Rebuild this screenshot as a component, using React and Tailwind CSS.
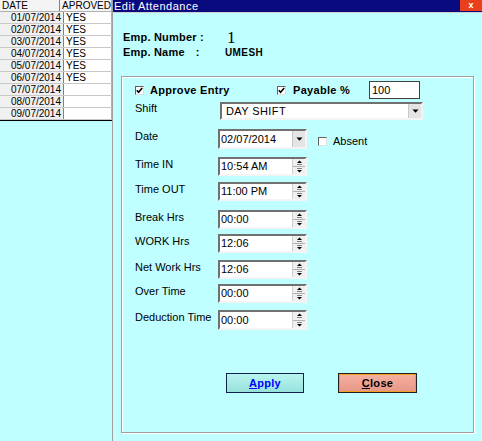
import React from "react";

const F = "font-['Liberation_Sans',Arial,sans-serif]";

const dates = [
  ["01/07/2014", "YES"],
  ["02/07/2014", "YES"],
  ["03/07/2014", "YES"],
  ["04/07/2014", "YES"],
  ["05/07/2014", "YES"],
  ["06/07/2014", "YES"],
  ["07/07/2014", ""],
  ["08/07/2014", ""],
  ["09/07/2014", ""],
];

function Check({ checked }) {
  return (
    <div className="w-[9px] h-[9px] bg-white border border-t-[#606060] border-l-[#606060] border-b-[#e0e0e0] border-r-[#e0e0e0] flex items-center justify-center shrink-0">
      {checked && (
        <svg width="7" height="7" viewBox="0 0 7 7">
          <path d="M0.8 3.2 L2.6 5.2 L6.2 1" stroke="#000" strokeWidth="1.6" fill="none" />
        </svg>
      )}
    </div>
  );
}

function Spin() {
  return (
    <div className="w-[13px] flex flex-col border-l border-[#d0d0d0] shrink-0">
      <div className="flex-1 bg-[#f0f0f0] border-b border-[#b0b0b0] flex items-center justify-center">
        <svg width="7" height="5" viewBox="0 0 7 5">
          <path d="M3.5 0.5 L6 3 L1 3 Z" fill="#000" />
          <path d="M1 4.5 L6 4.5" stroke="#808080" strokeWidth="1" />
        </svg>
      </div>
      <div className="flex-1 bg-[#f0f0f0] flex items-center justify-center">
        <svg width="7" height="5" viewBox="0 0 7 5">
          <path d="M1 0.5 L6 0.5" stroke="#808080" strokeWidth="1" />
          <path d="M1 2 L6 2 L3.5 4.5 Z" fill="#000" />
        </svg>
      </div>
    </div>
  );
}

function DropBtn() {
  return (
    <div className="w-[13px] bg-[#e4e4e4] border-l border-[#c8c8c8] flex items-center justify-center shrink-0">
      <svg width="7" height="4" viewBox="0 0 7 4">
        <path d="M0.5 0.5 L6.5 0.5 L3.5 3.8 Z" fill="#000" />
      </svg>
    </div>
  );
}

function Field({ value, spin = true, w = "w-[89px]", h = "h-[19px]" }) {
  return (
    <div className={`${w} ${h} bg-white border-2 border-t-[#707070] border-l-[#707070] border-b-[#f4f4f4] border-r-[#f4f4f4] flex`}>
      <div className="flex-1 pl-[1px] text-[11px] leading-[15px] text-black flex items-center">{value}</div>
      {spin ? <Spin /> : <DropBtn />}
    </div>
  );
}

function Row({ label, value, mt, spin = true }) {
  return (
    <div className={`flex items-start ${mt}`}>
      <div className="w-[83px] text-[11px] leading-[14px] text-black">{label}</div>
      <Field value={value} spin={spin} />
    </div>
  );
}

export default function App() {
  return (
    <div className={`w-[482px] h-[441px] bg-[#c0ffff] flex overflow-hidden ${F}`}>
      {/* Left grid */}
      <div className="w-[112px] shrink-0 flex flex-col">
        <div className="border-b border-black">
          <div className="flex h-[12px] border-b border-[#b0b0b0] bg-[#f4f4f4] text-[10px] leading-[11px] text-black">
            <div className="w-[64px] pl-[2px] border-r border-[#808080]">DATE</div>
            <div className="flex-1 pl-[2px] border-r border-[#b0b0b0]">APROVED</div>
          </div>
          {dates.map(([d, a]) => (
            <div key={d} className="flex h-[12px] border-b border-[#c8c8c8] text-[10px] leading-[11px] text-black">
              <div className="w-[64px] pr-[2px] text-right bg-[#f0f0f0] border-r border-[#808080]">{d}</div>
              <div className="flex-1 pl-[2px] bg-white border-r border-[#b0b0b0]">{a}</div>
            </div>
          ))}
        </div>
      </div>

      {/* Dialog */}
      <div className="flex-1 flex flex-col border-l border-[#a0a0a0]">
        <div className="h-[12px] bg-[#0a0a80] flex items-center justify-between">
          <div className="text-white text-[11px] leading-[12px] tracking-[0.5px] pl-[1px]">Edit Attendance</div>
          <div className="w-[22px] h-[11px] self-start bg-[#e8401c] flex items-center justify-center text-white text-[9px] font-bold leading-[9px]">x</div>
        </div>
        <div className="flex-1 border-t border-[#d0d0d0] pl-[8px] pt-[17px] flex flex-col">
          <div className="pl-[2px] flex h-[15px] items-center text-black">
            <div className="w-[104px] text-[11px] font-bold tracking-[0.2px]">Emp. Number :</div>
            <div className="font-['Liberation_Serif',serif] text-[17px] leading-[15px]">1</div>
          </div>
          <div className="pl-[2px] flex h-[15px] items-center text-black">
            <div className="w-[102px] text-[11px] font-bold tracking-[0.2px]">
              Emp. Name<span className="ml-[11px]">:</span>
            </div>
            <div className="text-[10px] font-bold tracking-[0.4px]">UMESH</div>
          </div>

          {/* Group box */}
          <div className="mt-[16px] w-[353px] h-[357px] border border-[#a0a0a0] shadow-[1px_1px_0_#ffffff,inset_1px_1px_0_#ffffff] pl-[13px] pt-[4px] flex flex-col">
            <div className="flex items-center h-[18px]">
              <div className="w-[142px] flex items-center">
                <Check checked />
                <span className="ml-[6px] text-[11px] font-bold tracking-[0.3px] text-black">Approve Entry</span>
              </div>
              <div className="w-[92px] flex items-center">
                <Check checked />
                <span className="ml-[7px] text-[11px] font-bold tracking-[0.3px] text-black">Payable %</span>
              </div>
              <div className="w-[51px] h-[18px] bg-white border border-[#404040] text-[11px] leading-[16px] pl-[2px] text-black">100</div>
            </div>

            <div className="flex items-start mt-[3px]">
              <div className="w-[85px] text-[11px] leading-[13px] text-black">Shift</div>
              <div className="w-[203px] h-[18px] bg-white border-2 border-t-[#707070] border-l-[#707070] border-b-[#f4f4f4] border-r-[#f4f4f4] flex">
                <div className="flex-1 pl-[4px] text-[11px] leading-[14px] tracking-[0.4px] text-black">DAY SHIFT</div>
                <DropBtn />
              </div>
            </div>

            <div className="flex items-start mt-[9px]">
              <div className="w-[83px] text-[11px] leading-[14px] text-black">Date</div>
              <Field value="02/07/2014" spin={false} h="h-[20px]" />
              <div className="ml-[11px] mt-[6px] flex items-center">
                <Check />
                <span className="ml-[6px] text-[11px] leading-[12px] text-black">Absent</span>
              </div>
            </div>

            <Row label="Time IN" value="10:54 AM" mt="mt-[8px]" />
            <Row label="Time OUT" value="11:00 PM" mt="mt-[6px]" />
            <Row label="Break Hrs" value="00:00" mt="mt-[9px]" />
            <Row label="WORK Hrs" value="12:06" mt="mt-[5px]" />
            <Row label="Net Work Hrs" value="12:06" mt="mt-[7px]" />
            <Row label="Over Time" value="00:00" mt="mt-[5px]" />
            <div className="flex items-start mt-[7px]">
              <div className="w-[83px] text-[11px] leading-[14px] text-black whitespace-nowrap">Deduction Time</div>
              <Field value="00:00" h="h-[20px]" />
            </div>

            <div className="flex mt-[43px] ml-[91px]">
              <div className="w-[78px] h-[20px] border border-[#102050] bg-gradient-to-b from-[#b8f4f0] to-[#98e2dc] flex items-center justify-center text-[11px] font-bold text-[#0000ff] tracking-[0.3px]">
                <span><span className="underline">A</span>pply</span>
              </div>
              <div className="ml-[34px] w-[79px] h-[20px] border border-[#202020] flex">
                <div className="flex-1 border border-[#f0a020] bg-gradient-to-b from-[#f6b0a0] to-[#e89888] flex items-center justify-center text-[11px] font-bold text-black tracking-[0.3px]">
                  <span><span className="underline">C</span>lose</span>
                </div>
              </div>
            </div>
          </div>
        </div>
      </div>
    </div>
  );
}
